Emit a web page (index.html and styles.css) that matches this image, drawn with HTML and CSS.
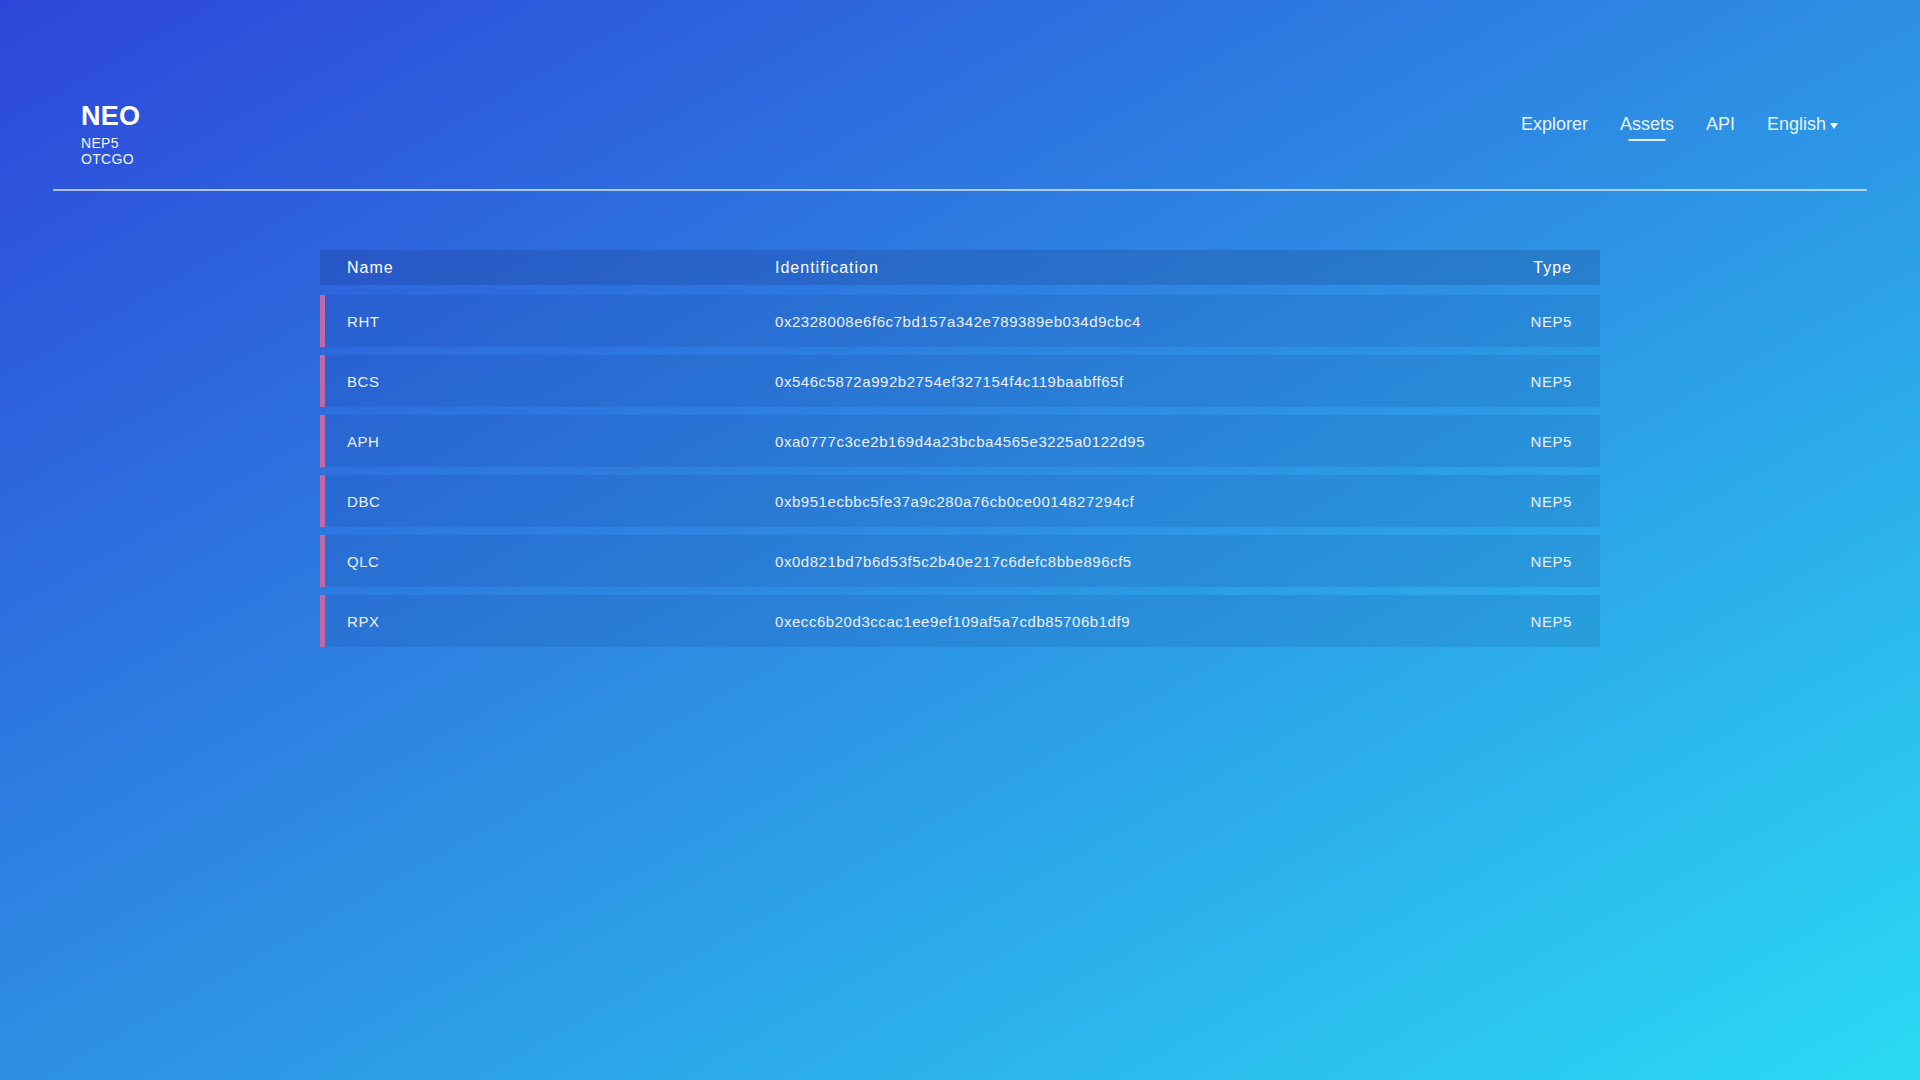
FILE: index.html
```html
<!DOCTYPE html>
<html lang="en">
<head>
<meta charset="utf-8">
<title>NEO NEP5 Assets</title>
<link rel="stylesheet" href="styles.css">
</head>
<body>
<div class="page">
  <header class="header">
    <div class="logo">
      <div class="logo-title">NEO</div>
      <div class="logo-sub">NEP5</div>
      <div class="logo-sub">OTCGO</div>
    </div>
    <nav class="nav">
      <a class="nav-item">Explorer</a>
      <a class="nav-item active">Assets</a>
      <a class="nav-item">API</a>
      <a class="nav-item lang">English <span class="caret"></span></a>
    </nav>
  </header>

  <main class="table">
    <div class="thead">
      <div>Name</div>
      <div>Identification</div>
      <div class="right">Type</div>
    </div>
    <div class="row"><div>RHT</div><div>0x2328008e6f6c7bd157a342e789389eb034d9cbc4</div><div class="right">NEP5</div></div>
    <div class="row"><div>BCS</div><div>0x546c5872a992b2754ef327154f4c119baabff65f</div><div class="right">NEP5</div></div>
    <div class="row"><div>APH</div><div>0xa0777c3ce2b169d4a23bcba4565e3225a0122d95</div><div class="right">NEP5</div></div>
    <div class="row"><div>DBC</div><div>0xb951ecbbc5fe37a9c280a76cb0ce0014827294cf</div><div class="right">NEP5</div></div>
    <div class="row"><div>QLC</div><div>0x0d821bd7b6d53f5c2b40e217c6defc8bbe896cf5</div><div class="right">NEP5</div></div>
    <div class="row"><div>RPX</div><div>0xecc6b20d3ccac1ee9ef109af5a7cdb85706b1df9</div><div class="right">NEP5</div></div>
  </main>
</div>
</body>
</html>
```
FILE: styles.css
```css
html, body {
  margin: 0;
  padding: 0;
  height: 100%;
}
body {
  font-family: "Liberation Sans", Arial, sans-serif;
  color: #fff;
  background: linear-gradient(to bottom right, #2d46d9 0%, #2d8fe4 50%, #2bdaf4 100%);
  min-height: 1080px;
  overflow: hidden;
}
.page {
  width: 1920px;
  height: 1080px;
}
.header {
  margin: 0 53px;
  padding: 101px 29px 22px 28px;
  border-bottom: 2px solid rgba(225, 240, 255, 0.7);
  display: flex;
  justify-content: space-between;
  align-items: flex-start;
}
.logo-title {
  font-size: 27px;
  font-weight: bold;
  line-height: 30px;
  margin-bottom: 4px;
  letter-spacing: 0.3px;
}
.logo-sub {
  font-size: 14px;
  line-height: 16px;
  letter-spacing: 0.3px;
  color: #eef3ff;
}
.nav {
  display: flex;
  gap: 32px;
  margin-top: 11px;
}
.nav-item {
  font-size: 18px;
  line-height: 24px;
  color: rgba(255, 255, 255, 0.9);
  position: relative;
  cursor: pointer;
}
.nav-item.active::after {
  content: "";
  position: absolute;
  left: 50%;
  transform: translateX(-50%);
  top: 27px;
  width: 37px;
  height: 2px;
  background: rgba(255, 255, 255, 0.85);
}
.lang {
  display: flex;
  align-items: center;
  gap: 4px;
}
.caret {
  width: 0;
  height: 0;
  border-left: 4.5px solid transparent;
  border-right: 4.5px solid transparent;
  border-top: 6px solid rgba(255, 255, 255, 0.92);
  margin-top: 3px;
}
.table {
  width: 1280px;
  margin: 59px 0 0 320px;
}
.thead, .row {
  display: grid;
  grid-template-columns: 428px 1fr auto;
  align-items: center;
  padding: 0 28px 0 27px;
}
.thead {
  height: 35px;
  background: rgba(20, 40, 110, 0.2);
  font-size: 16px;
  letter-spacing: 1px;
  color: #fff;
  margin-bottom: 10px;
}
.row {
  height: 52px;
  margin-bottom: 8px;
  background: rgba(20, 40, 120, 0.12);
  border-left: 5px solid #bd6aa6;
  padding-left: 22px;
  font-size: 15px;
  letter-spacing: 0.55px;
  color: #eaf1fd;
}
.right {
  text-align: right;
}
```
